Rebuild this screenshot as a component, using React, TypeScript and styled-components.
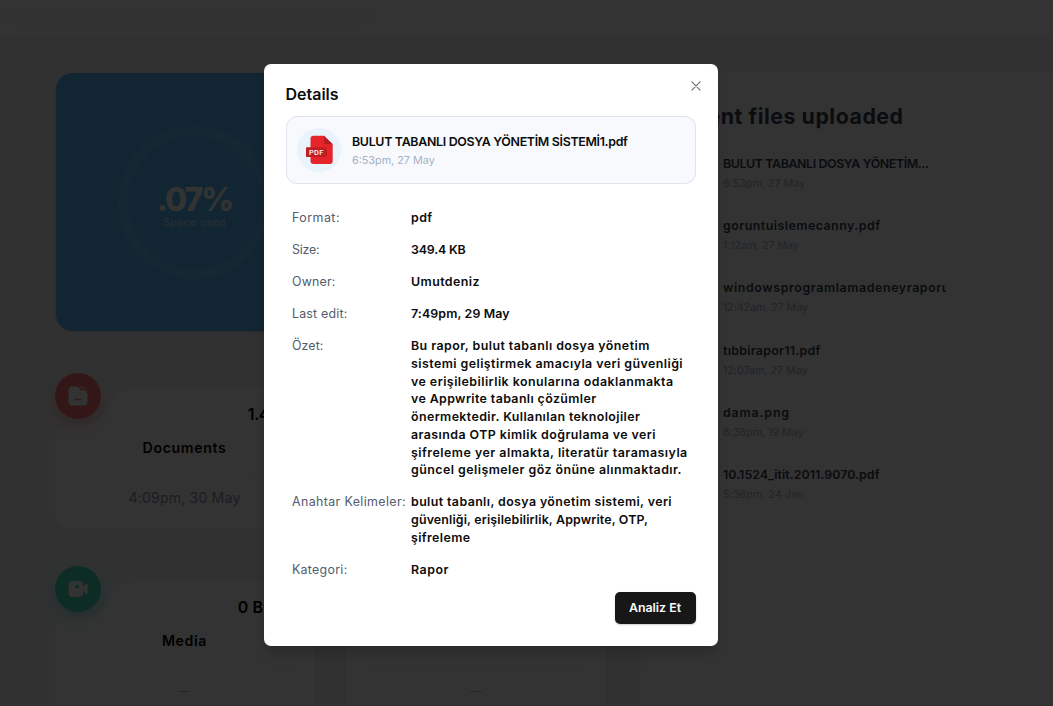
import React from 'react';
import styled, { createGlobalStyle } from 'styled-components';

const GlobalStyle = createGlobalStyle`
  * { box-sizing: border-box; }
  body {
    margin: 0;
    background: #f2f4f8;
    font-family: Inter, "Liberation Sans", sans-serif;
  }
`;

interface TextProps {
  $track?: number;
}

const Page = styled.div`
  position: relative;
  width: 1053px;
  height: 706px;
  overflow: hidden;
  background: #fff;
  display: flex;
  flex-direction: column;
`;

const Header = styled.header`
  flex: none;
  height: 37px;
`;

const SearchResults = styled.div`
  width: 380px;
  height: 12px;
  background: #fff;
  border-radius: 0 0 18px 0;
  box-shadow: 0 7px 27px rgba(65, 89, 214, 0.1);
`;

const Main = styled.main`
  flex: 1;
  min-height: 0;
  background: #f2f4f8;
  display: grid;
  grid-template-columns: 551px 440px;
  gap: 35px;
  padding: 35px 0 0 55px;
`;

const Overview = styled.section`
  display: flex;
  flex-direction: column;
  gap: 42px;
  padding-top: 1px;
`;

const UsageCard = styled.div`
  flex: none;
  height: 258px;
  margin-left: 1px;
  padding-left: 62px;
  display: flex;
  align-items: center;
  border-radius: 17px;
  background: #56b8ff;
  box-shadow: 0 1px 3px rgba(0, 0, 0, 0.15);
`;

const Gauge = styled.div`
  width: 153px;
  height: 153px;
  padding-top: 9px;
  display: flex;
  flex-direction: column;
  align-items: center;
  justify-content: center;
  border: 10.5px solid rgba(255, 255, 255, 0.12);
  border-radius: 50%;
  color: #fff;
`;

const Percent = styled.span`
  font-size: 32px;
  line-height: 32px;
  font-weight: 800;
  letter-spacing: -2px;
`;

const PercentNote = styled.span`
  padding-top: 0;
  font-size: 10.8px;
  line-height: 14px;
  letter-spacing: 0.28px;
  opacity: 0.7;
`;

const CategoryGrid = styled.div`
  display: grid;
  grid-template-columns: 259px 260px;
  grid-auto-rows: 155px;
  gap: 38px 32px;
`;

const CategoryCard = styled.article`
  position: relative;
  display: flex;
  flex-direction: column;
  align-items: center;
  padding: 0 17px;
`;

const CardShape = styled.svg`
  position: absolute;
  left: 0;
  bottom: 0;
  z-index: 0;
`;

const CardTop = styled.div`
  position: relative;
  width: 100%;
  height: 65px;
  display: flex;
  justify-content: space-between;
`;

const Badge = styled.div<{ $color: string; $glow: string }>`
  width: 46px;
  height: 46px;
  margin-left: -17px;
  display: flex;
  align-items: center;
  justify-content: center;
  border-radius: 50%;
  background: ${(p) => p.$color};
  box-shadow: 0 7px 18px ${(p) => p.$glow};
`;

const CategorySize = styled.span<TextProps>`
  padding-top: 31px;
  font-size: 16px;
  line-height: 20px;
  font-weight: 600;
  letter-spacing: ${(p) => p.$track ?? 0}px;
`;

const CategoryName = styled.h3`
  position: relative;
  width: 100%;
  height: 37px;
  margin: 0;
  text-align: center;
  border-bottom: 1px solid #f2f4f8;
  font-size: 14.2px;
  line-height: 20px;
  font-weight: 600;
  letter-spacing: 0.6px;
`;

const CategoryTime = styled.span<{ $faint?: boolean }>`
  position: relative;
  padding-top: 13px;
  color: ${(p) => (p.$faint ? '#b4b7c2' : '#8c93a8')};
  font-size: ${(p) => (p.$faint ? 11 : 14.2)}px;
  line-height: 20px;
  letter-spacing: 0.11px;
`;

const RecentPanel = styled.section`
  padding: 31px 26px;
  border-radius: 17px;
  background: #fff;
`;

const RecentTitle = styled.h2`
  margin: 0 0 26px;
  color: #333f4e;
  font-size: 21.3px;
  line-height: 26px;
  font-weight: 700;
  letter-spacing: 0.54px;
`;

const RecentList = styled.ul`
  width: 279px;
  margin: 0;
  padding: 0 0 0 56px;
  list-style: none;
  display: grid;
  grid-auto-rows: 62.2px;
`;

const RecentItem = styled.li`
  overflow: hidden;
`;

const RecentName = styled.div<TextProps>`
  color: #333f4e;
  font-size: 12.4px;
  line-height: 18px;
  font-weight: 600;
  white-space: nowrap;
  letter-spacing: ${(p) => p.$track ?? 0}px;
`;

const RecentDate = styled.div<TextProps>`
  padding-top: 2px;
  color: #a3b2c7;
  font-size: 10.8px;
  line-height: 17px;
  letter-spacing: ${(p) => p.$track ?? 0}px;
`;

const Overlay = styled.div`
  position: absolute;
  inset: 0;
  display: flex;
  justify-content: center;
  align-items: flex-start;
  padding: 64px 72px 0 0;
  background: rgba(0, 0, 0, 0.8);
`;

const Dialog = styled.div`
  position: relative;
  width: 454px;
  height: 582px;
  padding: 20px 22px;
  display: flex;
  flex-direction: column;
  border-radius: 7px;
  background: #fff;
  box-shadow: 0 9px 14px -3px rgba(0, 0, 0, 0.2);
  color: #0c0c0d;
`;

const CloseButton = styled.button`
  position: absolute;
  top: 14px;
  right: 14px;
  width: 16px;
  height: 16px;
  padding: 0;
  border: 0;
  background: none;
  display: flex;
  align-items: center;
  justify-content: center;
`;

const DialogTitle = styled.h2`
  margin: 0;
  font-size: 16px;
  line-height: 20px;
  font-weight: 600;
`;

const FileCard = styled.div`
  margin-top: 12px;
  height: 68px;
  padding: 0 10.5px;
  display: flex;
  align-items: center;
  gap: 11px;
  border: 1px solid #dde4ee;
  border-radius: 11px;
  background: #f7f9fc;
`;

const FileIcon = styled.div`
  width: 44px;
  height: 44px;
  border-radius: 50%;
  background: #e8f3fc;
`;

const FileMeta = styled.div`
  display: flex;
  flex-direction: column;
  padding-top: 1px;
`;

const FileName = styled.span`
  font-size: 12.4px;
  line-height: 18px;
  font-weight: 600;
  letter-spacing: -0.31px;
`;

const FileDate = styled.span`
  padding-top: 1px;
  color: #a3b2c7;
  font-size: 10.8px;
  line-height: 17px;
`;

const DetailList = styled.dl`
  margin: 25px 0 0;
  padding-left: 6.5px;
  display: grid;
  grid-template-columns: 119px 1fr;
  row-gap: 14.25px;
  font-size: 12.4px;
  line-height: 17.75px;
`;

const DetailLabel = styled.dt<TextProps>`
  color: #525c6b;
  white-space: nowrap;
  letter-spacing: ${(p) => p.$track ?? 0}px;
`;

const DetailValue = styled.dd`
  margin: 0;
  font-weight: 600;
`;

const ValueLine = styled.span<TextProps>`
  display: block;
  white-space: nowrap;
  letter-spacing: ${(p) => p.$track ?? 0}px;
`;

const AnalyzeButton = styled.button`
  align-self: flex-end;
  width: 81px;
  height: 32px;
  margin-top: 13.500px;
  padding: 0;
  border: 0;
  border-radius: 5px;
  background: #171717;
  box-shadow: 0 1px 2px rgba(0, 0, 0, 0.2);
  color: #fafafa;
  font: 600 12.4px/18px Inter, "Liberation Sans", sans-serif;
`;

type Line = [text: string, track: number];

const details: { label: Line; lines: Line[] }[] = [
  { label: ['Format:', 0.49], lines: [['pdf', 0.41]] },
  { label: ['Size:', -0.18], lines: [['349.4 KB', -0.18]] },
  { label: ['Owner:', 0.18], lines: [['Umutdeniz', 0.44]] },
  { label: ['Last edit:', 0.2], lines: [['7:49pm, 29 May', 0.13]] },
  {
    label: ['Özet:', 0.1],
    lines: [
      ['Bu rapor, bulut tabanlı dosya yönetim', 0.448],
      ['sistemi geliştirmek amacıyla veri güvenliği', 0.446],
      ['ve erişilebilirlik konularına odaklanmakta', 0.46],
      ['ve Appwrite tabanlı çözümler', 0.387],
      ['önermektedir. Kullanılan teknolojiler', 0.4],
      ['arasında OTP kimlik doğrulama ve veri', 0.443],
      ['şifreleme yer almakta, literatür taramasıyla', 0.495],
      ['güncel gelişmeler göz önüne alınmaktadır.', 0.455],
    ],
  },
  {
    label: ['Anahtar Kelimeler:', 0.39],
    lines: [
      ['bulut tabanlı, dosya yönetim sistemi, veri', 0.398],
      ['güvenliği, erişilebilirlik, Appwrite, OTP,', 0.151],
      ['şifreleme', 0.4],
    ],
  },
  { label: ['Kategori:', 0.29], lines: [['Rapor', 0.53]] },
];

const recentFiles: { name: Line; date: Line }[] = [
  { name: ['BULUT TABANLI DOSYA YÖNETİM...', -0.39], date: ['6:53pm, 27 May', -0.05] },
  { name: ['goruntuislemecanny.pdf', 0.48], date: ['1:12am, 27 May', -0.15] },
  { name: ['windowsprogramlamadeneyraporu', 0.6], date: ['12:42am, 27 May', -0.12] },
  { name: ['tıbbirapor11.pdf', 0.27], date: ['12:07am, 27 May', -0.06] },
  { name: ['dama.png', 0.85], date: ['8:38pm, 19 May', -0.05] },
  { name: ['10.1524_itit.2011.9070.pdf', 0.056], date: ['5:36pm, 24 Jan', 0.01] },
];

function DocumentIcon() {
  return (
    <svg width="20" height="20" viewBox="0 0 20 20">
      <path
        d="M4.5.5H9C10 .5 10.4 1 11 2l.8 1.2c.5.8 1 1 2 1H15c3 0 4.500 1.300 4.500 4V15c0 3-1.500 4.500-4.500 4.500H5C2 19.500.5 18 .5 15V4.500C.5 2 2 .5 4.500.5Z"
        fill="#fff"
      />
      <path d="M12 .8h3c1.600 0 2.500.8 2.700 2.300-.8-.3-1.600-.4-2.500-.4h-1.300c-.7 0-1-.2-1.300-.8Z" fill="#fff" opacity="0.6" />
      <path d="M7.300 13.500h5.400" stroke="#ff7474" strokeWidth="1.400" strokeLinecap="round" />
    </svg>
  );
}

function MediaIcon() {
  return (
    <svg width="20" height="20" viewBox="0 0 20 20">
      <path d="M4.500 2H11c2.700 0 4 1.300 4 4v8c0 2.700-1.300 4-4 4H4.500c-2.700 0-4-1.300-4-4V6c0-2.700 1.300-4 4-4Z" fill="#fff" />
      <path d="m15 7.500 3-2.300c.9-.7 1.700-.3 1.700.8v8c0 1.100-.8 1.500-1.700.8l-3-2.300Z" fill="#fff" />
      <circle cx="9.200" cy="7.600" r="1.800" fill="#3dd9b3" />
    </svg>
  );
}

function PdfIcon() {
  return (
    <svg width="44" height="44" viewBox="0 0 44 44">
      <path d="M16.500 7.700H27l8.700 8.500V33a3 3 0 0 1-3 3H16.500a3 3 0 0 1-3-3V10.700a3 3 0 0 1 3-3Z" fill="#e5252a" />
      <path d="M27 7.700l8.700 8.500H29a2 2 0 0 1-2-2Z" fill="#b71d21" />
      <rect x="9" y="19.300" width="21" height="9.700" rx="0.800" fill="#c11e22" />
      <text x="19.300" y="26.800" textAnchor="middle" fontFamily="Roboto, sans-serif" fontSize="7.400" fontWeight="500" letterSpacing="0.300" fill="#fff">
        PDF
      </text>
    </svg>
  );
}

interface CategoryProps {
  name?: string;
  size?: string;
  sizeTrack?: number;
  time: string;
  color: string;
  glow: string;
  icon?: React.ReactNode;
}

function Category({ name, size, sizeTrack, time, color, glow, icon }: CategoryProps) {
  return (
    <CategoryCard>
      <CardShape width="100%" height="139" viewBox="0 0 259 139" preserveAspectRatio="none">
        <path
          d="M0 54Q0 37 20 37C42 37 48 27 55 16C62 4 70 0 86 0H242Q259 0 259 17V122Q259 139 242 139H17Q0 139 0 122Z"
          fill="#fff"
        />
      </CardShape>
      <CardTop>
        <Badge $color={color} $glow={glow}>{icon}</Badge>
        <CategorySize $track={sizeTrack}>{size}</CategorySize>
      </CardTop>
      <CategoryName>{name}</CategoryName>
      <CategoryTime $faint={time === '—'}>{time}</CategoryTime>
    </CategoryCard>
  );
}

export default function App() {
  return (
    <>
      <GlobalStyle />
      <Page>
        <Header>
          <SearchResults />
        </Header>
        <Main>
          <Overview>
            <UsageCard>
              <Gauge>
                <Percent>.07%</Percent>
                <PercentNote>Space used</PercentNote>
              </Gauge>
            </UsageCard>
            <CategoryGrid>
              <Category name="Documents" size="1.4 MB" sizeTrack={-0.45} time="4:09pm, 30 May" color="#ff7474" glow="rgba(255,116,116,.4)" icon={<DocumentIcon />} />
              <Category time="" color="#56b8ff" glow="rgba(86,184,255,.4)" />
              <Category name="Media" size="0 Bytes" sizeTrack={0.1} time="—" color="#3dd9b3" glow="rgba(61,217,179,.4)" icon={<MediaIcon />} />
              <Category time="—" color="#eea8fd" glow="rgba(238,168,253,.4)" />
            </CategoryGrid>
          </Overview>
          <RecentPanel>
            <RecentTitle>Recent files uploaded</RecentTitle>
            <RecentList>
              {recentFiles.map(({ name, date }) => (
                <RecentItem key={name[0]}>
                  <RecentName $track={name[1]}>{name[0]}</RecentName>
                  <RecentDate $track={date[1]}>{date[0]}</RecentDate>
                </RecentItem>
              ))}
            </RecentList>
          </RecentPanel>
        </Main>
        <Overlay>
          <Dialog role="dialog" aria-label="Details">
            <CloseButton aria-label="Close">
              <svg width="10" height="10" viewBox="0 0 10 10" fill="none" stroke="#6b6b6b" strokeWidth="1.100" strokeLinecap="round">
                <path d="M.9.9l8.200 8.200M9.100.9L.9 9.100" />
              </svg>
            </CloseButton>
            <DialogTitle>Details</DialogTitle>
            <FileCard>
              <FileIcon><PdfIcon /></FileIcon>
              <FileMeta>
                <FileName>BULUT TABANLI DOSYA YÖNETİM SİSTEMİ1.pdf</FileName>
                <FileDate>6:53pm, 27 May</FileDate>
              </FileMeta>
            </FileCard>
            <DetailList>
              {details.map(({ label, lines }) => (
                <React.Fragment key={label[0]}>
                  <DetailLabel $track={label[1]}>{label[0]}</DetailLabel>
                  <DetailValue>
                    {lines.map(([text, track]) => (
                      <ValueLine key={text} $track={track}>{text}</ValueLine>
                    ))}
                  </DetailValue>
                </React.Fragment>
              ))}
            </DetailList>
            <AnalyzeButton>Analiz Et</AnalyzeButton>
          </Dialog>
        </Overlay>
      </Page>
    </>
  );
}
